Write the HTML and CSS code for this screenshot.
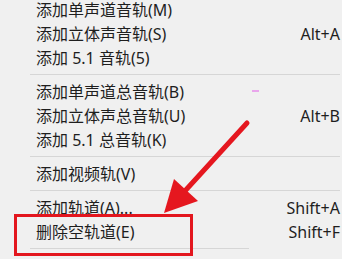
FILE: index.html
```html
<!DOCTYPE html>
<html lang="zh-CN">
<head>
<meta charset="utf-8">
<title>Menu</title>
<link rel="stylesheet" href="styles.css">
</head>
<body>
<div class="menu">
  <div class="item"><span class="label">添加单声道音轨(M)</span><span class="key"></span></div>
  <div class="item"><span class="label">添加立体声音轨(S)</span><span class="key">Alt+A</span></div>
  <div class="item"><span class="label">添加 5.1 音轨(5)</span><span class="key"></span></div>
  <div class="sep"></div>
  <div class="item"><span class="label">添加单声道总音轨(B)</span><span class="key"></span></div>
  <div class="item"><span class="label">添加立体声总音轨(U)</span><span class="key">Alt+B</span></div>
  <div class="item"><span class="label">添加 5.1 总音轨(K)</span><span class="key"></span></div>
  <div class="sep"></div>
  <div class="item"><span class="label">添加视频轨(V)</span><span class="key"></span></div>
  <div class="sep"></div>
  <div class="item"><span class="label">添加轨道(A)...</span><span class="key">Shift+A</span></div>
  <div class="item"><span class="label">删除空轨道(E)</span><span class="key">Shift+F</span></div>
  <div class="sep sep-short"></div>
</div>
<div class="mark"></div>
<div class="highlight-box"></div>
<svg class="arrow" width="342" height="259" viewBox="0 0 342 259" xmlns="http://www.w3.org/2000/svg">
  <line x1="247" y1="123" x2="184" y2="192" stroke="#e5171f" stroke-width="5" stroke-linecap="round"/>
  <polygon points="164,213 174,179 198,201" fill="#e5171f"/>
</svg>
</body>
</html>
```

FILE: styles.css
```css
html, body {
  margin: 0;
  padding: 0;
  width: 342px;
  height: 259px;
  overflow: hidden;
  background: #f0f0f0;
}

body {
  position: relative;
  font-family: "Noto Sans", "Noto Sans CJK SC", sans-serif;
  font-size: 16px;
  color: #1e1e1e;
}

.menu {
  width: 340px;
  margin-top: -2px;
  display: flex;
  flex-direction: column;
}

.item {
  height: 24px;
  display: flex;
  align-items: center;
  justify-content: space-between;
  padding-left: 36px;
  white-space: nowrap;
}

.label {
  line-height: 24px;
}

.key {
  line-height: 24px;
}

.sep {
  height: 1px;
  background: #d6d6d6;
  margin: 4px 0 5px 30px;
}

.sep-short {
  width: 219px;
}

.mark {
  position: absolute;
  left: 252px;
  top: 90px;
  width: 7px;
  height: 2px;
  background: #e9a6ec;
}

.highlight-box {
  position: absolute;
  left: 14px;
  top: 214px;
  width: 173px;
  height: 36px;
  border: 3px solid #e3161e;
}

.arrow {
  position: absolute;
  left: 0;
  top: 0;
}
```
